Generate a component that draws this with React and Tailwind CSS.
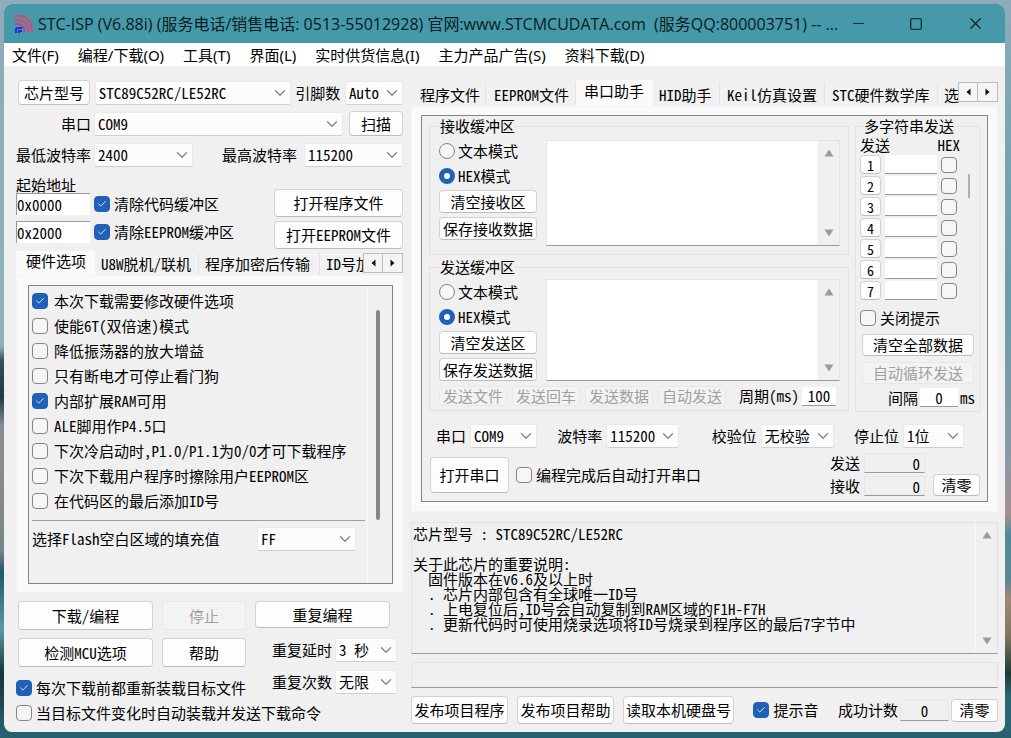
import React, { useState } from 'react';
import { ChevronDown, Minus, Square, X, Check } from 'lucide-react';

const menus = ['文件(F)', '编程/下载(O)', '工具(T)', '界面(L)', '实时供货信息(I)', '主力产品广告(S)', '资料下载(D)'];

const hardwareOptions = [
  { label: '本次下载需要修改硬件选项', checked: true },
  { label: '使能6T(双倍速)模式', checked: false },
  { label: '降低振荡器的放大增益', checked: false },
  { label: '只有断电才可停止看门狗', checked: false },
  { label: '内部扩展RAM可用', checked: true },
  { label: 'ALE脚用作P4.5口', checked: false },
  { label: '下次冷启动时,P1.0/P1.1为0/0才可下载程序', checked: false },
  { label: '下次下载用户程序时擦除用户EEPROM区', checked: false },
  { label: '在代码区的最后添加ID号', checked: false },
];

const chipInfo = `芯片型号 : STC89C52RC/LE52RC

关于此芯片的重要说明:
  固件版本在v6.6及以上时
  . 芯片内部包含有全球唯一ID号
  . 上电复位后,ID号会自动复制到RAM区域的F1H-F7H
  . 更新代码时可使用烧录选项将ID号烧录到程序区的最后7字节中`;

function Button({ className, children, disabled }) {
  return (
    <button
      type="button"
      disabled={disabled}
      className={`shrink-0 rounded border text-center whitespace-nowrap ${disabled ? 'border-[#e8e8e8] bg-[#f3f3f3] text-[#a0a0a0]' : 'border-[#d2d2d2] border-b-[#bdbdbd] bg-[#fdfdfd]'} ${className}`}
    >
      {children}
    </button>
  )
}

function Select({ className, value, label }) {
  return (
    <div className={`relative h-6 shrink-0 ${className}`}>
      <select
        aria-label={label}
        defaultValue={value}
        className="h-full w-full appearance-none rounded-xs border border-[#e9e9e9] border-b-[#cfcfcf] bg-[#fcfcfc] pl-[3px] outline-none"
      >
        <option>{value}</option>
      </select>
      <ChevronDown size={18} strokeWidth={1.7} className="pointer-events-none absolute top-[3px] right-0.5 text-[#858585]" />
    </div>
  )
}

function CheckBox({ label, hidden, defaultChecked, className }) {
  const [checked, setChecked] = useState(defaultChecked || false);
  return (
    <label className={`flex shrink-0 items-center gap-1 whitespace-nowrap ${className}`}>
      <span className="relative size-4 shrink-0">
        <input
          type="checkbox"
          aria-label={label}
          checked={checked}
          onChange={() => setChecked(!checked)}
          className="block size-4 appearance-none rounded border border-[#858585] bg-[#f6f6f6] checked:border-[#2160b8] checked:bg-[#2160b8]"
        />
        {checked && <Check size={10} strokeWidth={2} className="pointer-events-none absolute top-[3px] left-[3px] text-white" />}
      </span>
      {!hidden && label}
    </label>
  )
}

function Radio({ name, label, defaultChecked }) {
  return (
    <label className="flex h-[25px] items-center gap-[3px]">
      <input
        type="radio"
        name={name}
        defaultChecked={defaultChecked}
        className="size-4 appearance-none rounded-full border border-[#858585] bg-[#f6f6f6] checked:border-[5px] checked:border-[#2160b8] checked:bg-white"
      />
      {label}
    </label>
  )
}

function TabArrows() {
  return (
    <div className="absolute top-0.5 right-0 flex">
      <button type="button" aria-label="向左" className="flex h-5 w-5 items-center justify-center border border-[#bdbdbd] bg-[#f4f4f4]">
        <svg width="5" height="8" viewBox="0 0 5 8"><path d="M4.500 .5v7L.5 4z" fill="#111" /></svg>
      </button>
      <button type="button" aria-label="向右" className="flex h-5 w-5 items-center justify-center border border-l-0 border-[#bdbdbd] bg-[#f4f4f4]">
        <svg width="5" height="8" viewBox="0 0 5 8"><path d="M.5 .5v7l4-3.500z" fill="#111" /></svg>
      </button>
    </div>
  )
}

function ScrollArrows({ className }) {
  return (
    <div className={`flex shrink-0 flex-col items-center justify-between border-l border-[#f8f8f8] bg-[#f0f0f0] py-2 ${className}`}>
      <svg width="10" height="8" viewBox="0 0 10 8"><path d="M5 .5 9.500 7.500H.5z" fill="#9a9a9a" /></svg>
      <svg width="10" height="8" viewBox="0 0 10 8"><path d="M5 7.500 9.500 .5H.5z" fill="#9a9a9a" /></svg>
    </div>
  )
}

function Tab({ active, className, children }) {
  return (
    <button
      type="button"
      className={`shrink-0 overflow-hidden text-left whitespace-nowrap ${active ? 'h-full bg-[#fafafa] pb-1' : 'h-[22px] border-r border-[#e4e4e4] bg-[#f1f1f1]'} ${className}`}
    >
      {children}
    </button>
  )
}

function TitleBar() {
  return (
    <header className="flex h-[39px] shrink-0 items-center bg-[#4599a9] pl-2.5 font-['Open_Sans','Noto_Sans_CJK_SC',sans-serif] text-base text-[#0b1c22]">
      <svg width="20" height="20" viewBox="0 0 20 20" fill="none" className="mr-1 shrink-0">
        <path d="M1 2h5q12 1 12 16" stroke="#e83f72" strokeWidth="2" />
        <path d="M1 6h4q9 1 9.500 12" stroke="#e83f72" strokeWidth="2" />
        <path d="M1 10h4q5 1 5.500 8" stroke="#c93c92" strokeWidth="2" />
        <path d="M2 19v-3q0-2 2-2h4M5 19v-2h3" stroke="#1a2be0" strokeWidth="2" />
      </svg>
      <h1 className="min-w-0 flex-1 leading-7 whitespace-pre">STC-ISP (V6.88i) (服务电话/销售电话: 0513-55012928) 官网:www.STCMCUDATA.com  (服务QQ:800003751) -- ...</h1>
      <button type="button" aria-label="最小化" className="flex w-[38px] justify-center"><Minus size={17} strokeWidth={1.2} /></button>
      <button type="button" aria-label="最大化" className="ml-2.5 flex w-[58px] justify-center"><Square size={14} strokeWidth={2} /></button>
      <button type="button" aria-label="关闭" className="flex w-[60px] justify-center"><X size={19} strokeWidth={1.4} /></button>
    </header>
  )
}

function HardwarePanel() {
  return (
    <section className="flex flex-col">
      <div className="relative flex h-6 items-end">
        <Tab active className="w-[79px] pl-2.5">硬件选项</Tab>
        <Tab className="w-[104px] pl-1.5">U8W脱机/联机</Tab>
        <Tab className="w-[121px] pl-1.5">程序加密后传输</Tab>
        <Tab className="w-10 flex-1 border-r-0 pl-1.5">ID号加密</Tab>
        <TabArrows />
      </div>
      <div className="h-[318px] border border-[#f4f4f4] bg-[#fafafa] py-[9px] pr-[9px] pl-[11px]">
        <div className="flex h-[299px] border border-[#858585] bg-[#f0f0f0]">
          <div className="flex-1 border-r border-[#fafafa] pt-0.5 pl-[3px]">
            {hardwareOptions.map((o) => (
              <CheckBox key={o.label} label={o.label} defaultChecked={o.checked} className="h-[25px] gap-[6px]" />
            ))}
            <div className="mt-[7px] mr-0.5 border-t border-[#a0a0a0]" />
            <div className="mt-1.5 flex items-center justify-between pr-[11px]">
              <span>选择Flash空白区域的填充值</span>
              <Select value="FF" label="填充值" className="w-[99px]" />
            </div>
          </div>
          <div className="w-6 pt-6 pl-2">
            <div className="h-[210px] w-1 rounded-full bg-[#868686]" />
          </div>
        </div>
      </div>
    </section>
  )
}

function BufferBox({ title, name, clear, save, boxClass, children }) {
  return (
    <fieldset className="min-w-0 border border-[#e2e2e2] pr-2 pb-1 pl-[9px]">
      <legend className="ml-px h-4 leading-4">{title}</legend>
      <div className="flex gap-[9px]">
        <div className="flex w-[98px] flex-col pt-1">
          <Radio name={name} label="文本模式" />
          <Radio name={name} label="HEX模式" defaultChecked />
          <Button className="mt-0.5 mb-1 h-[23px] w-[98px]">{clear}</Button>
          <Button className="h-[23px] w-[98px]">{save}</Button>
        </div>
        <div className={`flex min-w-0 flex-1 border border-[#e4e4e4] border-b-[#9a9a9a] bg-white ${boxClass}`}>
          <textarea aria-label={title} className="min-w-0 flex-1 resize-none outline-none" />
          <ScrollArrows className="w-[22px]" />
        </div>
      </div>
      {children}
    </fieldset>
  )
}

function MultiSend() {
  return (
    <fieldset className="w-[125px] shrink-0 border border-[#e2e2e2] px-1">
      <legend className="ml-1 h-4 leading-4">多字符串发送</legend>
      <div className="flex h-5 justify-between pt-[3px] pr-[15px]">
        <span>发送</span>
        <span>HEX</span>
      </div>
      <div className="flex">
        <div className="flex flex-col">
          {[1, 2, 3, 4, 5, 6, 7].map((n) => (
            <div key={n} className="flex h-[21px] items-center gap-1">
              <Button className="h-[19px] w-[21px] text-sm leading-4">{n}</Button>
              <input type="text" aria-label={`字符串${n}`} className="h-[19px] w-[52px] border-b border-[#9a9a9a] bg-white outline-none" />
              <CheckBox label={`HEX ${n}`} hidden />
            </div>
          ))}
        </div>
        <div className="mt-5 ml-[11px] h-6 w-0.5 bg-[#b0b0b0]" />
      </div>
      <CheckBox label="关闭提示" className="mt-[5px] h-6" />
      <Button className="mt-1 ml-0.5 h-[22px] w-[112px]">清空全部数据</Button>
      <Button disabled className="mt-1.5 ml-0.5 h-[22px] w-[112px]">自动循环发送</Button>
      <label className="mt-1 flex items-center justify-end gap-0.5 pb-1">
        间隔
        <input type="text" defaultValue="0" className="h-[19px] w-[38px] border-b border-[#9a9a9a] bg-white text-center outline-none" />
        <span>ms</span>
      </label>
    </fieldset>
  )
}

function SerialPanel() {
  return (
    <section className="flex flex-col">
      <div className="relative flex h-[26px] items-end">
        <Tab className="w-[75px] pl-[9px]">程序文件</Tab>
        <Tab className="w-[90px] pl-2">EEPROM文件</Tab>
        <Tab active className="w-[77px] pl-2">串口助手</Tab>
        <Tab className="w-[67px] pl-1.5">HID助手</Tab>
        <Tab className="w-[105px] pl-[7px]">Keil仿真设置</Tab>
        <Tab className="w-[113px] pl-[7px]">STC硬件数学库</Tab>
        <Tab className="w-10 flex-1 border-r-0 pl-1.5">选型</Tab>
        <TabArrows />
      </div>
      <div className="border border-[#f4f4f4] bg-[#fafafa] px-[9px] pt-2 pb-[9px]">
        <div className="h-[387px] border border-[#858585] bg-[#f0f0f0] px-[7px] pt-0.5">
          <div className="flex gap-1.5">
            <div className="flex min-w-0 flex-1 flex-col gap-1">
              <BufferBox title="接收缓冲区" name="recv" clear="清空接收区" save="保存接收数据" boxClass="mt-1.5 mb-1 h-[106px]" />
              <BufferBox title="发送缓冲区" name="send" clear="清空发送区" save="保存发送数据" boxClass="mt-1 h-[102px]">
                <div className="mt-[5px] flex items-center gap-[5px] pr-1">
                  <Button disabled className="h-5 w-[68px]">发送文件</Button>
                  <Button disabled className="h-5 w-[68px]">发送回车</Button>
                  <Button disabled className="h-5 w-[68px]">发送数据</Button>
                  <Button disabled className="h-5 w-[68px]">自动发送</Button>
                  <label className="ml-auto flex items-center gap-[3px]">
                    周期(ms)
                    <input type="text" defaultValue="100" className="h-[19px] w-[34px] border-b border-[#9a9a9a] bg-white text-center outline-none" />
                  </label>
                </div>
              </BufferBox>
            </div>
            <MultiSend />
          </div>
          <div className="mt-3 flex items-center justify-between pr-4 pl-[7px]">
            <div className="flex items-center gap-1"><span>串口</span><Select value="COM9" label="串口" className="w-[67px]" /></div>
            <div className="flex items-center gap-1"><span>波特率</span><Select value="115200" label="波特率" className="w-[73px]" /></div>
            <div className="ml-3 flex items-center gap-1"><span>校验位</span><Select value="无校验" label="校验位" className="w-[73px]" /></div>
            <div className="flex items-center gap-1"><span>停止位</span><Select value="1位" label="停止位" className="w-[61px]" /></div>
          </div>
          <div className="mt-[5px] flex items-center">
            <Button className="ml-px h-9 w-[79px]">打开串口</Button>
            <CheckBox label="编程完成后自动打开串口" className="ml-[7px]" />
            <div className="ml-auto flex flex-col gap-[3px]">
              <label className="flex items-center gap-1">发送<input readOnly type="text" defaultValue="0" className="h-5 w-[61px] border border-[#e6e6e6] border-b-[#9a9a9a] pr-1 text-right outline-none" /></label>
              <label className="flex items-center gap-1">接收<input readOnly type="text" defaultValue="0" className="h-5 w-[61px] border border-[#e6e6e6] border-b-[#9a9a9a] pr-1 text-right outline-none" /></label>
            </div>
            <Button className="ml-2 h-[22px] w-[47px] self-end">清零</Button>
          </div>
        </div>
      </div>
    </section>
  )
}

export default function App() {
  return (
    <div className="flex min-h-screen bg-[linear-gradient(#8fabb9,#8ab3bd_50%,#2d6674_90%,#28616e)] pt-1 pb-1.5">
      {/* desktop showing on both sides of the window */}
      <div className="w-1 shrink-0 bg-[linear-gradient(#8fabb9,#8ab3bd_47%,#33505c_49%,#1f3a40_54%,#8a8f94_58%,#7d8488_75%,#1f5a6b_78%,#5d98a3_86%,#12343a_92%,#28616e)]" />
      <div className="flex min-w-0 flex-1 flex-col overflow-hidden rounded-lg bg-[#f0f0f0] font-['Noto_Sans_Mono_CJK_SC','Noto_Sans_CJK_SC',monospace] text-[15px] leading-4 text-black">
        <TitleBar />
        <nav className="flex h-[23px] shrink-0 items-center gap-[19px] bg-white pl-2 font-['Noto_Sans','Noto_Sans_CJK_SC',sans-serif] text-[15px]">
          {menus.map((m) => <button key={m} type="button" className="whitespace-nowrap">{m}</button>)}
        </nav>
        <main className="flex flex-1 gap-2 pr-[7px] pl-3">
          <div className="w-[387px] shrink-0 pt-3.5">
            <div className="flex items-center justify-between">
              <Button className="ml-0.5 h-[25px] w-[72px]">芯片型号</Button>
              <Select value="STC89C52RC/LE52RC" label="芯片型号" className="w-[196px]" />
              <span>引脚数</span>
              <Select value="Auto" label="引脚数" className="w-[58px]" />
            </div>
            <div className="mt-1.5 flex items-center">
              <span className="w-[75px] text-right">串口</span>
              <Select value="COM9" label="串口" className="ml-[3px] w-[249px]" />
              <Button className="ml-auto h-[25px] w-[54px]">扫描</Button>
            </div>
            <div className="mt-[7px] flex items-center whitespace-nowrap">
              <span className="w-[75px]">最低波特率</span>
              <Select value="2400" label="最低波特率" className="ml-[3px] w-[99px]" />
              <span className="ml-auto">最高波特率</span>
              <Select value="115200" label="最高波特率" className="ml-[7px] w-[99px]" />
            </div>
            <div className="mt-2.5 flex">
              <div className="flex-1">
                <div>起始地址</div>
                <div className="flex items-center gap-1">
                  <input type="text" aria-label="代码起始地址" defaultValue="0x0000" className="h-[22px] w-[74px] border-t border-l border-[#9a9a9a] bg-white outline-none" />
                  <CheckBox label="清除代码缓冲区" defaultChecked />
                </div>
                <div className="mt-1.5 flex items-center gap-1">
                  <input type="text" aria-label="EEPROM起始地址" defaultValue="0x2000" className="h-[22px] w-[74px] border-t border-l border-[#9a9a9a] bg-white outline-none" />
                  <CheckBox label="清除EEPROM缓冲区" defaultChecked />
                </div>
              </div>
              <div className="flex flex-col gap-1 pt-3">
                <Button className="h-7 w-[129px]">打开程序文件</Button>
                <Button className="h-7 w-[129px]">打开EEPROM文件</Button>
              </div>
            </div>
            <div className="mt-0.5"><HardwarePanel /></div>
            <div className="mt-2 flex px-0.5">
              <div className="grid grid-cols-[135px_84px] gap-x-[9px] gap-y-2">
                <Button className="h-[29px]">下载/编程</Button>
                <Button disabled className="h-[29px]">停止</Button>
                <Button className="h-[29px]">检测MCU选项</Button>
                <Button className="h-[29px]">帮助</Button>
              </div>
              <Button className="ml-[9px] h-[27px] w-[135px]">重复编程</Button>
            </div>
            <div className="-mt-[29px] ml-64 flex flex-col gap-2">
              <div className="flex items-center gap-[3px]"><span>重复延时</span><Select value="3 秒" label="重复延时" className="w-[62px]" /></div>
              <div className="flex items-center gap-[3px]"><span>重复次数</span><Select value="无限" label="重复次数" className="w-[62px]" /></div>
            </div>
            <CheckBox label="每次下载前都重新装载目标文件" defaultChecked className="-mt-3.5 w-60" />
            <CheckBox label="当目标文件变化时自动装载并发送下载命令" className="mt-[9px]" />
          </div>

          <div className="min-w-0 flex-1 pt-3.5">
            <SerialPanel />
            <div className="mt-2.5 flex h-[132px] border border-[#e2e2e2] border-b-[#9a9a9a]">
              <textarea readOnly aria-label="芯片说明" value={chipInfo} className="min-w-0 flex-1 resize-none overflow-hidden pt-[3px] pl-px leading-[15px] outline-none" />
              <ScrollArrows className="w-[22px]" />
            </div>
            <input readOnly type="text" aria-label="状态" className="mt-2 block h-[26px] w-full border border-[#e2e2e2] border-b-[#9a9a9a] outline-none" />
            <div className="mt-2 flex items-center">
              <Button className="h-7 w-[97px]">发布项目程序</Button>
              <Button className="ml-[9px] h-7 w-[97px]">发布项目帮助</Button>
              <Button className="ml-[9px] h-7 w-[111px]">读取本机硬盘号</Button>
              <CheckBox label="提示音" defaultChecked className="ml-auto" />
              <label className="ml-auto flex items-center gap-0.5">
                成功计数
                <input readOnly type="text" defaultValue="0" className="h-[22px] w-[49px] border border-[#e6e6e6] border-b-[#9a9a9a] text-center outline-none" />
              </label>
              <Button className="ml-0.5 h-[23px] w-[47px]">清零</Button>
            </div>
          </div>
        </main>
      </div>
      <div className="w-1.5 shrink-0 bg-[linear-gradient(#8fabb9,#7ba6b2_15%,#6a9eac_40%,#8a9aa5_62%,#a58f90_70%,#4f8b9b_73%,#5c8792_79%,#a08873_82%,#7d7460_87%,#1d3a30_92%,#2a6574_95%)]" />
    </div>
  )
}
